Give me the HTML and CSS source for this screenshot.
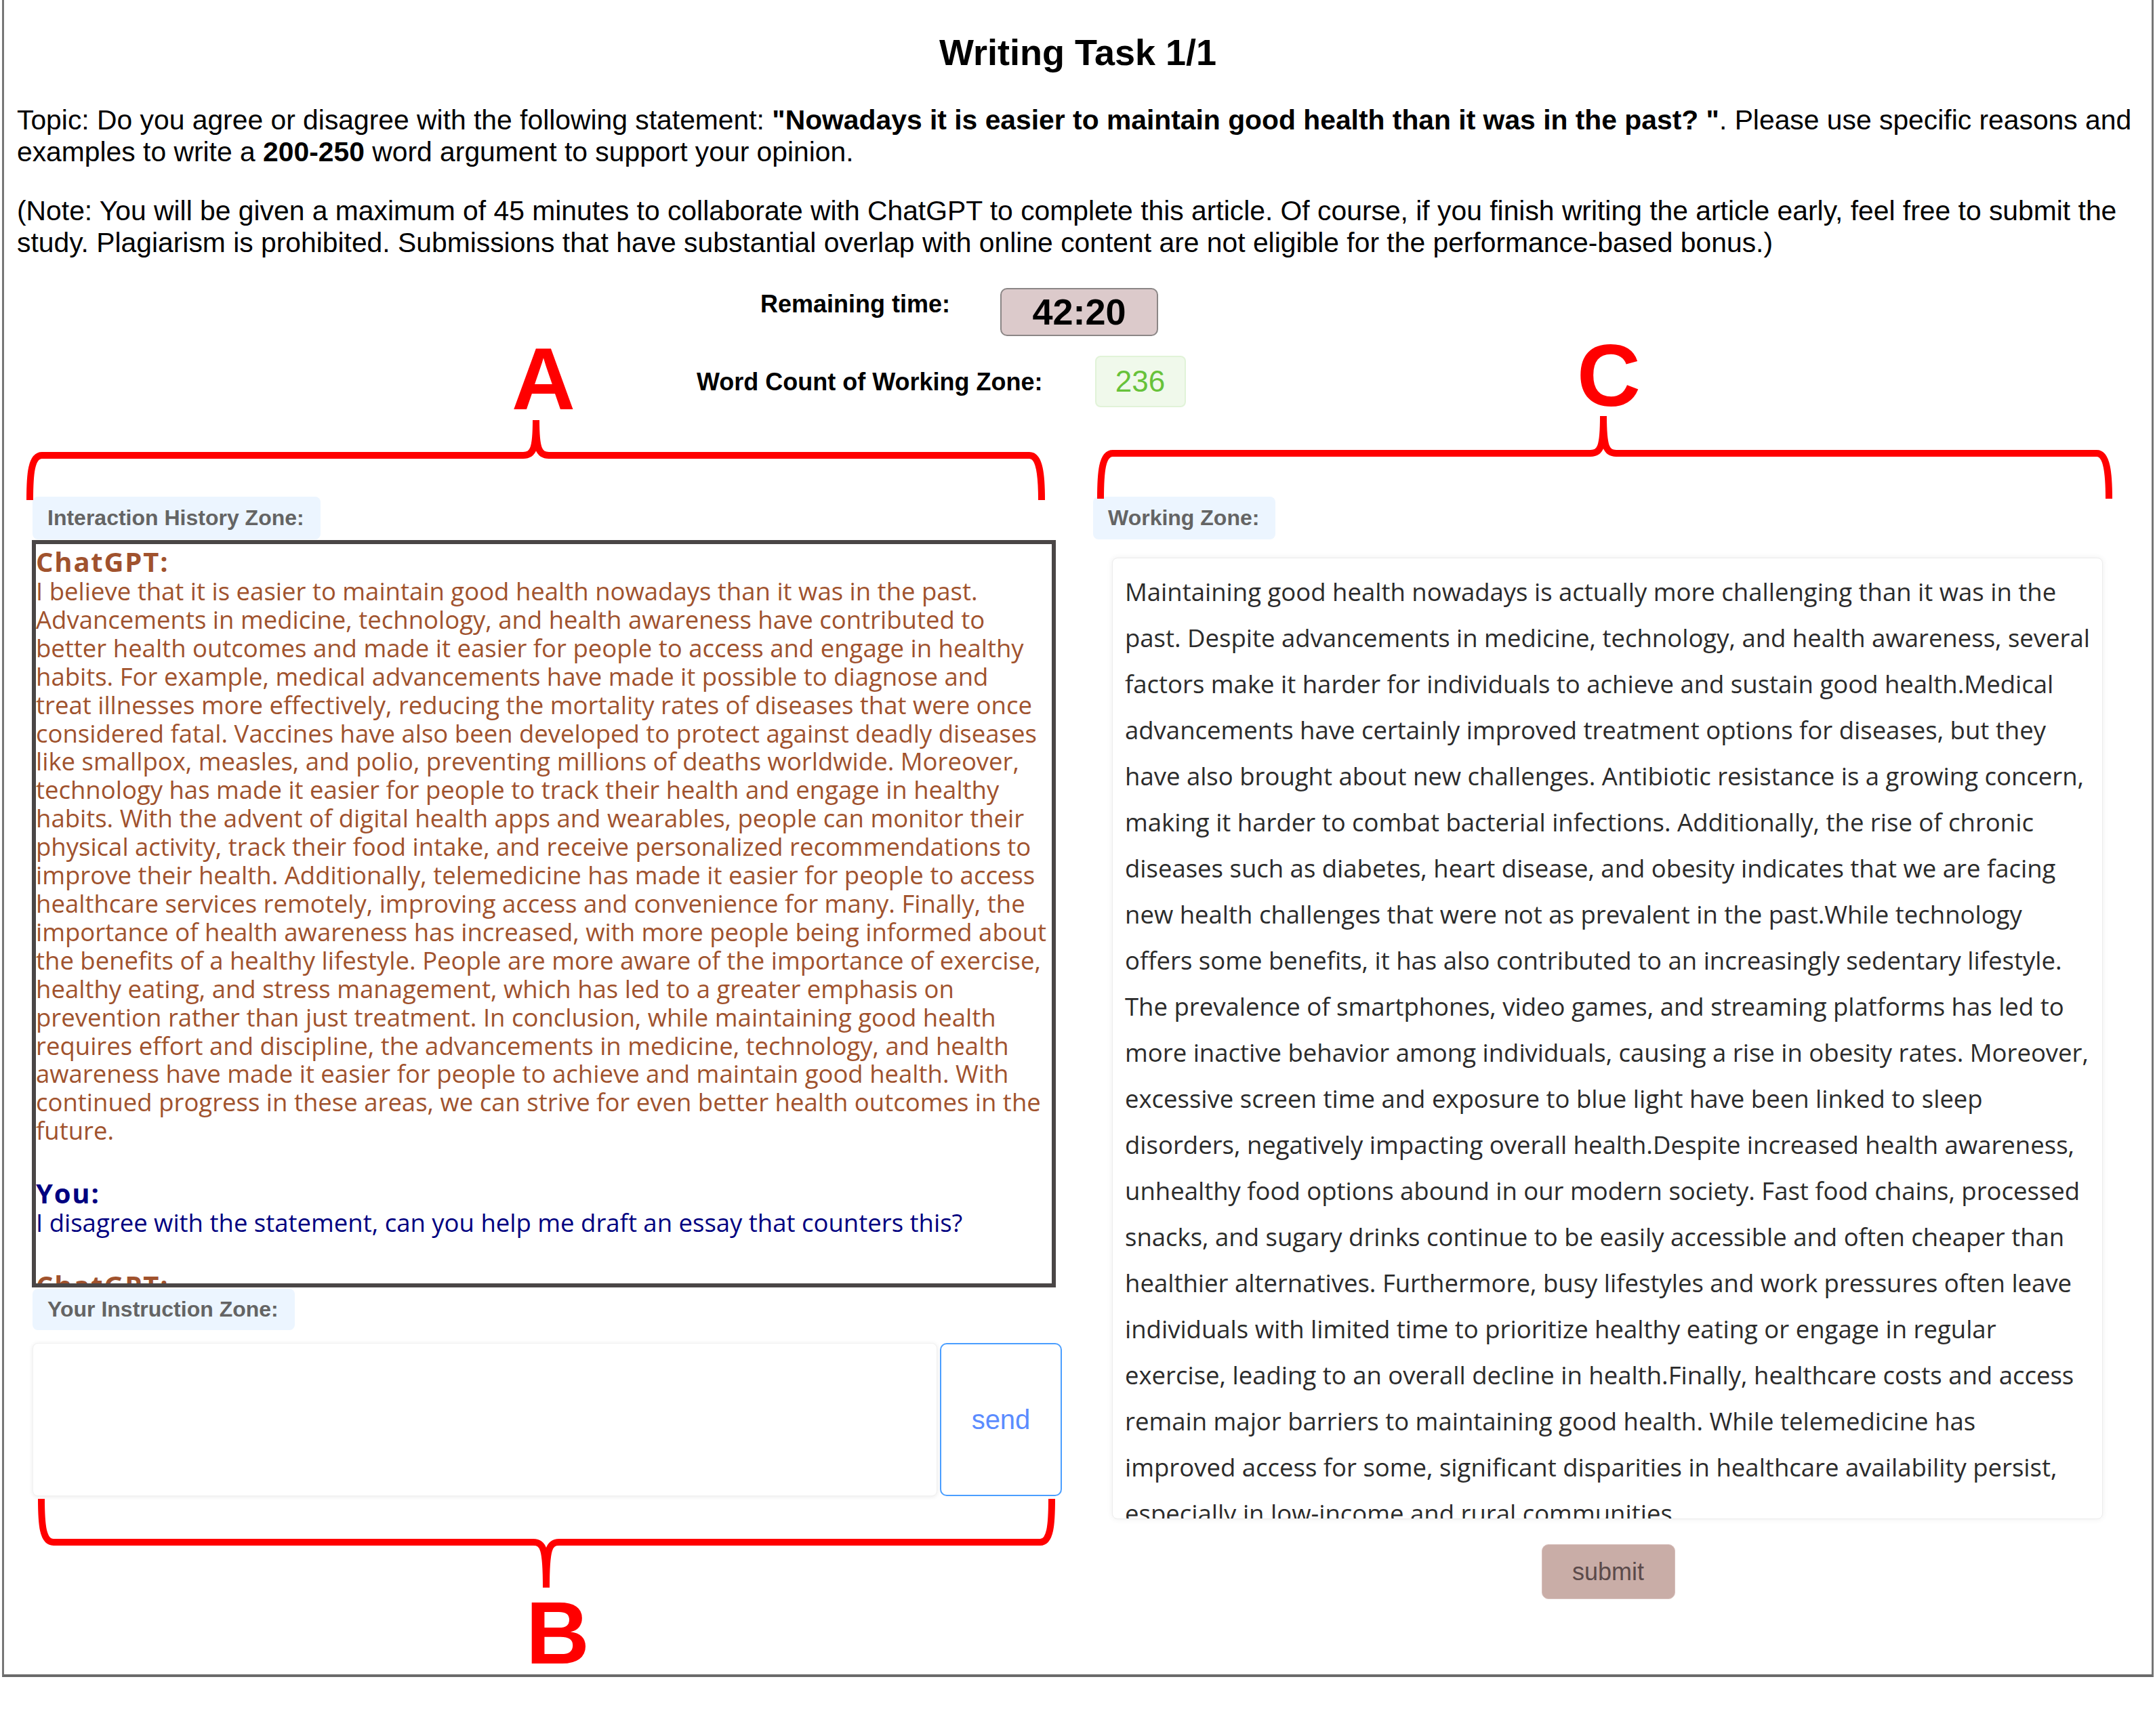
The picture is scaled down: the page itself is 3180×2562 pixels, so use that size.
FILE: index.html
```html
<!DOCTYPE html>
<html lang="en">
<head>
<meta charset="utf-8">
<title>Writing Task 1/1</title>
<link rel="stylesheet" href="styles.css">
</head>
<body>
<div class="page">
  <h1 class="title">Writing Task 1/1</h1>
  <p class="topic">Topic: Do you agree or disagree with the following statement: <b>"Nowadays it is easier to maintain good health than it was in the past? "</b>. Please use specific reasons and examples to write a <b>200-250</b> word argument to support your opinion.</p>
  <p class="note">(Note: You will be given a maximum of 45 minutes to collaborate with ChatGPT to complete this article. Of course, if you finish writing the article early, feel free to submit the study. Plagiarism is prohibited. Submissions that have substantial overlap with online content are not eligible for the performance-based bonus.)</p>

  <div class="stats">
    <div class="stat stat-time">
      <span class="stat-label">Remaining time:</span>
      <span class="timer">42:20</span>
    </div>
    <div class="stat stat-count">
      <span class="stat-label">Word Count of Working Zone:</span>
      <span class="count">236</span>
    </div>
  </div>

  <div class="zones">
    <section class="zone zone-left">
      <div class="tag">Interaction History Zone:</div>
      <div class="history">
        <div class="msg msg-bot">
          <div class="who">ChatGPT:</div>
          <p class="said">I believe that it is easier to maintain good health nowadays than it was in the past.<br>
Advancements in medicine, technology, and health awareness have contributed to<br>
better health outcomes and made it easier for people to access and engage in healthy<br>
habits. For example, medical advancements have made it possible to diagnose and<br>
treat illnesses more effectively, reducing the mortality rates of diseases that were once<br>
considered fatal. Vaccines have also been developed to protect against deadly diseases<br>
like smallpox, measles, and polio, preventing millions of deaths worldwide. Moreover,<br>
technology has made it easier for people to track their health and engage in healthy<br>
habits. With the advent of digital health apps and wearables, people can monitor their<br>
physical activity, track their food intake, and receive personalized recommendations to<br>
improve their health. Additionally, telemedicine has made it easier for people to access<br>
healthcare services remotely, improving access and convenience for many. Finally, the<br>
importance of health awareness has increased, with more people being informed about<br>
the benefits of a healthy lifestyle. People are more aware of the importance of exercise,<br>
healthy eating, and stress management, which has led to a greater emphasis on<br>
prevention rather than just treatment. In conclusion, while maintaining good health<br>
requires effort and discipline, the advancements in medicine, technology, and health<br>
awareness have made it easier for people to achieve and maintain good health. With<br>
continued progress in these areas, we can strive for even better health outcomes in the<br>
future.</p>
        </div>
        <div class="msg msg-user">
          <div class="who">You:</div>
          <p class="said">I disagree with the statement, can you help me draft an essay that counters this?</p>
        </div>
        <div class="msg msg-bot">
          <div class="who">ChatGPT:</div>
          <p class="said">Maintaining good health nowadays is actually more challenging than it was in the past.</p>
        </div>
      </div>
      <div class="tag tag-instr">Your Instruction Zone:</div>
      <div class="instr-row">
        <div class="instr-input"></div>
        <button class="send" type="button">send</button>
      </div>
    </section>

    <section class="zone zone-right">
      <div class="tag">Working Zone:</div>
      <div class="working">Maintaining good health nowadays is actually more challenging than it was in the<br>
past. Despite advancements in medicine, technology, and health awareness, several<br>
factors make it harder for individuals to achieve and sustain good health.Medical<br>
advancements have certainly improved treatment options for diseases, but they<br>
have also brought about new challenges. Antibiotic resistance is a growing concern,<br>
making it harder to combat bacterial infections. Additionally, the rise of chronic<br>
diseases such as diabetes, heart disease, and obesity indicates that we are facing<br>
new health challenges that were not as prevalent in the past.While technology<br>
offers some benefits, it has also contributed to an increasingly sedentary lifestyle.<br>
The prevalence of smartphones, video games, and streaming platforms has led to<br>
more inactive behavior among individuals, causing a rise in obesity rates. Moreover,<br>
excessive screen time and exposure to blue light have been linked to sleep<br>
disorders, negatively impacting overall health.Despite increased health awareness,<br>
unhealthy food options abound in our modern society. Fast food chains, processed<br>
snacks, and sugary drinks continue to be easily accessible and often cheaper than<br>
healthier alternatives. Furthermore, busy lifestyles and work pressures often leave<br>
individuals with limited time to prioritize healthy eating or engage in regular<br>
exercise, leading to an overall decline in health.Finally, healthcare costs and access<br>
remain major barriers to maintaining good health. While telemedicine has<br>
improved access for some, significant disparities in healthcare availability persist,<br>
especially in low-income and rural communities.</div>
      <div class="submit-row">
        <button class="submit" type="button">submit</button>
      </div>
    </section>
  </div>
</div>

<svg class="annot" width="3180" height="2562" viewBox="0 0 3180 2562" xmlns="http://www.w3.org/2000/svg">
  <g class="brace">
    <path d="M44 738 C44 700 46 672 62 672 L772 672 C787 672 791 662 791 620"/>
    <path d="M791 620 C791 662 795 672 810 672 L1519 672 C1534 672 1537 700 1537 738"/>
    <path d="M1624 736 C1624 698 1626 669 1642 669 L2347 669 C2362 669 2366 659 2366 614"/>
    <path d="M2366 614 C2366 659 2370 669 2385 669 L3094 669 C3109 669 3112 698 3112 736"/>
    <path d="M61 2212 C61 2250 63 2276 79 2276 L787 2276 C802 2276 806 2286 806 2343"/>
    <path d="M806 2343 C806 2286 810 2276 825 2276 L1535 2276 C1550 2276 1552 2250 1552 2212"/>
  </g>
  <text class="mark" x="802" y="604">A</text>
  <text class="mark" x="2374" y="599">C</text>
  <text class="mark" x="823" y="2455">B</text>
</svg>
</body>
</html>
```

FILE: styles.css
```css
html, body {
  margin: 0;
  padding: 0;
  background: #ffffff;
}

body {
  position: relative;
  width: 3180px;
  min-height: 2562px;
  font-family: "Liberation Sans", Arial, sans-serif;
  color: #000;
}

.page {
  box-sizing: border-box;
  width: 3175px;
  height: 2475px;
  margin-left: 3px;
  border-left: 3px solid #767676;
  border-right: 3px solid #767676;
  border-bottom: 4px solid #6a6a6a;
}

.title {
  margin: 0;
  padding-top: 46px;
  font-size: 54px;
  line-height: 62px;
  font-weight: 700;
  text-align: center;
}

.topic,
.note {
  margin: 0;
  padding: 0 14px 0 19px;
  font-size: 40.85px;
  line-height: 47px;
}

.topic { margin-top: 46px; }
.note { margin-top: 40px; }

.stats {
  margin-top: 43px;
  display: flex;
  flex-direction: column;
  gap: 29px;
}

.stat {
  display: flex;
}

.stat-label {
  font-size: 36px;
  font-weight: 700;
  line-height: 41px;
}

.stat-time {
  align-items: flex-start;
  padding-left: 1116px;
  gap: 74px;
}

.stat-time .stat-label { padding-top: 3px; }

.stat-count {
  align-items: center;
  padding-left: 1022px;
  gap: 77px;
}

.timer {
  box-sizing: border-box;
  width: 233px;
  height: 71px;
  border: 2px solid #8b8686;
  border-radius: 10px;
  background: #dccacb;
  font-size: 54px;
  font-weight: 700;
  line-height: 67px;
  text-align: center;
}

.count {
  box-sizing: border-box;
  width: 134px;
  height: 76px;
  border: 2px solid #e1f3d8;
  border-radius: 8px;
  background: #f0f9eb;
  color: #67c23a;
  font-size: 44px;
  line-height: 72px;
  text-align: center;
}

.zones {
  margin-top: 132px;
  padding-left: 41px;
  display: grid;
  grid-template-columns: 1520px 1518px;
  column-gap: 46px;
  align-items: start;
}

.zone {
  display: flex;
  flex-direction: column;
  align-items: flex-start;
}

.tag {
  box-sizing: border-box;
  height: 63px;
  padding: 0 24px 0 22px;
  border-radius: 8px;
  background: #ecf5ff;
  color: #646464;
  font-size: 32px;
  font-weight: 700;
  line-height: 63px;
}

.zone-left .tag { margin-left: 1px; }

.history {
  box-sizing: border-box;
  width: 1511px;
  height: 1103px;
  margin-top: 1px;
  padding: 2px 0 0 0;
  border: 6px solid #4a4646;
  overflow: hidden;
  font-family: "Open Sans", "DejaVu Sans", sans-serif;
}

.msg { margin-bottom: 47px; }

.who {
  font-size: 40px;
  font-weight: 700;
  line-height: 47px;
  letter-spacing: 1.8px;
}

.said {
  margin: 0;
  font-size: 36.5px;
  line-height: 41.9px;
  white-space: nowrap;
}

.msg-bot { color: #a0522d; }
.msg-user { color: #000080; }

.tag-instr {
  height: 61px;
  line-height: 61px;
  margin-top: 2px;
}

.instr-row {
  margin-top: 19px;
  margin-left: 1px;
  display: flex;
  gap: 4px;
}

.instr-input {
  box-sizing: border-box;
  width: 1335px;
  height: 226px;
  border: 1px solid #f1f1f1;
  border-radius: 8px;
  background: #fff;
  box-shadow: 0 1px 6px rgba(0, 0, 0, 0.09);
}

.send {
  box-sizing: border-box;
  width: 180px;
  height: 226px;
  padding: 0;
  border: 2px solid #4a9eff;
  border-radius: 10px;
  background: #fff;
  color: #5b8cff;
  font-family: "Liberation Sans", Arial, sans-serif;
  font-size: 40px;
}

.working {
  box-sizing: border-box;
  width: 1462px;
  height: 1419px;
  margin: 27px 0 0 28px;
  padding: 15px 18px 0 18px;
  border: 1px solid #ececec;
  border-radius: 8px;
  background: #fff;
  box-shadow: 0 0 8px rgba(0, 0, 0, 0.07);
  overflow: hidden;
  white-space: nowrap;
  color: #2b2b2b;
  font-family: "Open Sans", "DejaVu Sans", sans-serif;
  font-size: 36.5px;
  line-height: 68px;
}

.submit-row {
  align-self: stretch;
  display: flex;
  justify-content: center;
  margin-top: 37px;
  padding-left: 2px;
}

.submit {
  box-sizing: border-box;
  width: 197px;
  height: 81px;
  padding: 0;
  border: 1px solid #d7bfbb;
  border-radius: 10px;
  background: #c9ada7;
  color: #5b4a4a;
  font-family: "Liberation Sans", Arial, sans-serif;
  font-size: 36px;
}

.annot {
  position: absolute;
  top: 0;
  left: 0;
  pointer-events: none;
}

.brace path {
  fill: none;
  stroke: #ff0000;
  stroke-width: 10;
  stroke-linecap: butt;
  stroke-linejoin: round;
}

.mark {
  fill: #ff0000;
  font-family: "Liberation Sans", Arial, sans-serif;
  font-size: 130px;
  font-weight: 700;
  text-anchor: middle;
}
```
